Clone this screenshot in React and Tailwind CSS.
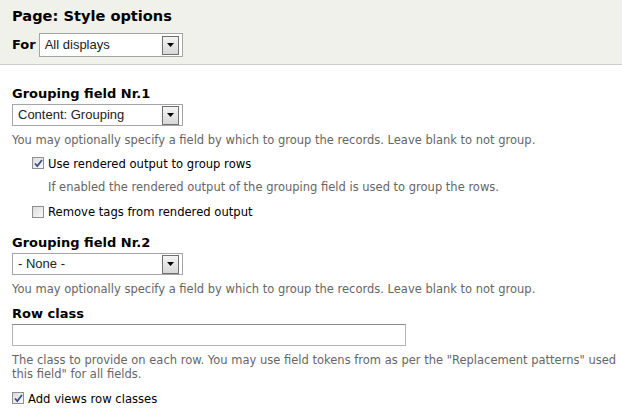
import React from 'react';

const Arrow = () => (
  <div className="w-[17px] h-[19px] border border-[#707070] bg-gradient-to-b from-[#f4f4f4] to-[#d8d8d8] flex items-center justify-center">
    <svg width="7" height="4" viewBox="0 0 7 4"><path d="M0 0h7L3.5 4z" fill="#000" /></svg>
  </div>
);

const Select = ({ value, className }) => (
  <div className={`border border-[#a5a5a5] bg-white flex items-center justify-between pl-[5px] pr-[3px] font-['Liberation_Sans'] text-[13px] text-[#222] ${className}`}>
    <span>{value}</span>
    <Arrow />
  </div>
);

const Checkbox = ({ checked, className = '' }) => (
  <div className={`w-[12px] h-[12px] border border-[#8f8f8f] bg-gradient-to-br from-[#dcdcdc] to-[#fafafa] flex items-center justify-center shrink-0 ${className}`}>
    {checked && (
      <svg width="9" height="9" viewBox="0 0 9 9">
        <path d="M1 4.5l2.3 2.6L8 1" fill="none" stroke="#3b4f86" strokeWidth="1.8" />
      </svg>
    )}
  </div>
);

const Help = ({ children, className = '' }) => (
  <p className={`text-[11.5px] text-[#666] whitespace-nowrap ${className}`}>{children}</p>
);

const Label = ({ children, className = '' }) => (
  <h3 className={`text-[13px] font-bold leading-[16px] text-black ${className}`}>{children}</h3>
);

export default function App() {
  return (
    <div className="w-[622px] h-[413px] overflow-hidden bg-white font-['DejaVu_Sans',sans-serif]">
      {/* header */}
      <div className="h-[65px] bg-[#f1f1ec] border-b border-[#cccccc] px-3 pt-[6px]">
        <h1 className="text-[14.6px] font-bold leading-[20px] text-black">Page: Style options</h1>
        <div className="flex items-center gap-[3px] mt-[7px]">
          <span className="text-[13px] font-bold">For</span>
          <Select value="All displays" className="w-[144px] h-[24px]" />
        </div>
      </div>

      <div className="px-3 pt-[21px]">
        <Label>Grouping field Nr.1</Label>
        <Select value="Content: Grouping" className="w-[171px] h-[22px] mt-[2px]" />
        <Help className="leading-[16px] mt-[6px]">You may optionally specify a field by which to group the records. Leave blank to not group.</Help>

        <div className="pl-5 mt-[8px]">
          <div className="flex items-start gap-[4px]">
            <Checkbox checked className="mt-[1px]" />
            <span className="text-[11.6px] leading-[16px]">Use rendered output to group rows</span>
          </div>
          <Help className="leading-[16px] pl-[16px] mt-[7px]">If enabled the rendered output of the grouping field is used to group the rows.</Help>
          <div className="flex items-start gap-[4px] mt-[9px]">
            <Checkbox className="mt-[2px]" />
            <span className="text-[11.6px] leading-[16px]">Remove tags from rendered output</span>
          </div>
        </div>

        <Label className="mt-[15px]">Grouping field Nr.2</Label>
        <Select value="- None -" className="w-[171px] h-[22px] mt-[2px]" />
        <Help className="leading-[16px] mt-[6px]">You may optionally specify a field by which to group the records. Leave blank to not group.</Help>

        <Label className="mt-[9px]">Row class</Label>
        <div className="w-[394px] h-[22px] border border-[#b4b4b4] border-t-[#8a8a8a] bg-white mt-[2px]" />
        <div className="mt-[7px] leading-[14px]">
          <Help>The class to provide on each row. You may use field tokens from as per the "Replacement patterns" used</Help>
          <Help>this field" for all fields.</Help>
        </div>

        <div className="flex items-start gap-[4px] mt-[10px]">
          <Checkbox checked className="mt-[1px]" />
          <span className="text-[11.6px] leading-[16px]">Add views row classes</span>
        </div>
      </div>
    </div>
  );
}
